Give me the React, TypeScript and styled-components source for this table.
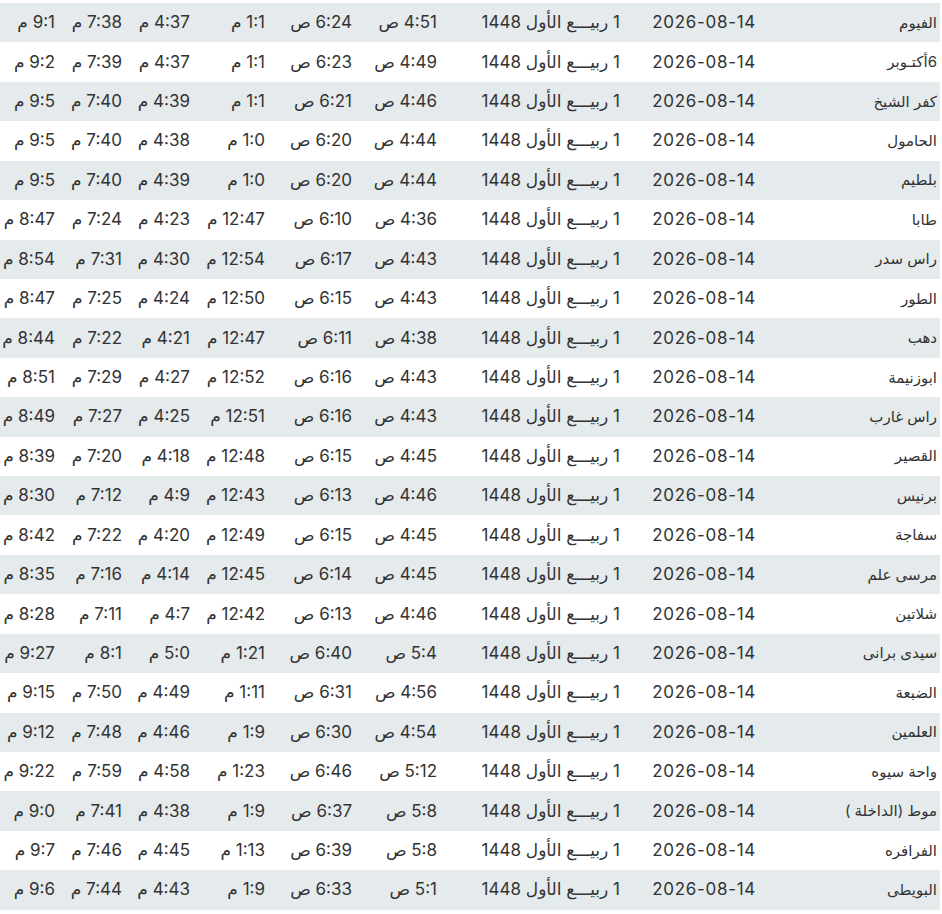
import styled, { createGlobalStyle } from 'styled-components';

const GlobalStyle = createGlobalStyle`
  html, body {
    margin: 0;
    padding: 0;
    background: #fff;
  }
  body {
    font-family: Inter, "DejaVu Sans", sans-serif;
  }
`;

type Row = {
  city: string;
  fajr: string;
  sunrise: string;
  dhuhr: string;
  asr: string;
  maghrib: string;
  isha: string;
};

const DATE = '2026-08-14';
const HIJRI = '1 ربيـــع الأول 1448';

const rows: Row[] = [
  { city: 'الفيوم', fajr: '4:51 ص', sunrise: '6:24 ص', dhuhr: '1:1 م', asr: '4:37 م', maghrib: '7:38 م', isha: '9:1 م' },
  { city: '6أكتـوبر', fajr: '4:49 ص', sunrise: '6:23 ص', dhuhr: '1:1 م', asr: '4:37 م', maghrib: '7:39 م', isha: '9:2 م' },
  { city: 'كفر الشيخ', fajr: '4:46 ص', sunrise: '6:21 ص', dhuhr: '1:1 م', asr: '4:39 م', maghrib: '7:40 م', isha: '9:5 م' },
  { city: 'الحامول', fajr: '4:44 ص', sunrise: '6:20 ص', dhuhr: '1:0 م', asr: '4:38 م', maghrib: '7:40 م', isha: '9:5 م' },
  { city: 'بلطيم', fajr: '4:44 ص', sunrise: '6:20 ص', dhuhr: '1:0 م', asr: '4:39 م', maghrib: '7:40 م', isha: '9:5 م' },
  { city: 'طابا', fajr: '4:36 ص', sunrise: '6:10 ص', dhuhr: '12:47 م', asr: '4:23 م', maghrib: '7:24 م', isha: '8:47 م' },
  { city: 'راس سدر', fajr: '4:43 ص', sunrise: '6:17 ص', dhuhr: '12:54 م', asr: '4:30 م', maghrib: '7:31 م', isha: '8:54 م' },
  { city: 'الطور', fajr: '4:43 ص', sunrise: '6:15 ص', dhuhr: '12:50 م', asr: '4:24 م', maghrib: '7:25 م', isha: '8:47 م' },
  { city: 'دهب', fajr: '4:38 ص', sunrise: '6:11 ص', dhuhr: '12:47 م', asr: '4:21 م', maghrib: '7:22 م', isha: '8:44 م' },
  { city: 'ابوزنيمة', fajr: '4:43 ص', sunrise: '6:16 ص', dhuhr: '12:52 م', asr: '4:27 م', maghrib: '7:29 م', isha: '8:51 م' },
  { city: 'راس غارب', fajr: '4:43 ص', sunrise: '6:16 ص', dhuhr: '12:51 م', asr: '4:25 م', maghrib: '7:27 م', isha: '8:49 م' },
  { city: 'القصير', fajr: '4:45 ص', sunrise: '6:15 ص', dhuhr: '12:48 م', asr: '4:18 م', maghrib: '7:20 م', isha: '8:39 م' },
  { city: 'برنيس', fajr: '4:46 ص', sunrise: '6:13 ص', dhuhr: '12:43 م', asr: '4:9 م', maghrib: '7:12 م', isha: '8:30 م' },
  { city: 'سفاجة', fajr: '4:45 ص', sunrise: '6:15 ص', dhuhr: '12:49 م', asr: '4:20 م', maghrib: '7:22 م', isha: '8:42 م' },
  { city: 'مرسى علم', fajr: '4:45 ص', sunrise: '6:14 ص', dhuhr: '12:45 م', asr: '4:14 م', maghrib: '7:16 م', isha: '8:35 م' },
  { city: 'شلاتين', fajr: '4:46 ص', sunrise: '6:13 ص', dhuhr: '12:42 م', asr: '4:7 م', maghrib: '7:11 م', isha: '8:28 م' },
  { city: 'سيدى برانى', fajr: '5:4 ص', sunrise: '6:40 ص', dhuhr: '1:21 م', asr: '5:0 م', maghrib: '8:1 م', isha: '9:27 م' },
  { city: 'الضبعة', fajr: '4:56 ص', sunrise: '6:31 ص', dhuhr: '1:11 م', asr: '4:49 م', maghrib: '7:50 م', isha: '9:15 م' },
  { city: 'العلمين', fajr: '4:54 ص', sunrise: '6:30 ص', dhuhr: '1:9 م', asr: '4:46 م', maghrib: '7:48 م', isha: '9:12 م' },
  { city: 'واحة سيوه', fajr: '5:12 ص', sunrise: '6:46 ص', dhuhr: '1:23 م', asr: '4:58 م', maghrib: '7:59 م', isha: '9:22 م' },
  { city: 'موط (الداخلة )', fajr: '5:8 ص', sunrise: '6:37 ص', dhuhr: '1:9 م', asr: '4:38 م', maghrib: '7:41 م', isha: '9:0 م' },
  { city: 'الفرافره', fajr: '5:8 ص', sunrise: '6:39 ص', dhuhr: '1:13 م', asr: '4:45 م', maghrib: '7:46 م', isha: '9:7 م' },
  { city: 'البويطى', fajr: '5:1 ص', sunrise: '6:33 ص', dhuhr: '1:9 م', asr: '4:43 م', maghrib: '7:44 م', isha: '9:6 م' },
];

// column widths, right to left
const widths = [181, 136, 183, 85, 87, 75, 68, 67, 58];

const App = (): JSX.Element => (
  <>
    <GlobalStyle />
    <Page>
      <Table dir="rtl">
        <colgroup>
          {widths.map((w, i) => (
            <col key={i} style={{ width: w }} />
          ))}
        </colgroup>
        <tbody>
          {rows.map((r, i) => (
            <Tr key={r.city} $striped={i % 2 === 0}>
              <City>{r.city}</City>
              <DateCell>{DATE}</DateCell>
              <Hijri>{HIJRI}</Hijri>
              <Td>{r.fajr}</Td>
              <Td>{r.sunrise}</Td>
              <Td>{r.dhuhr}</Td>
              <Td>{r.asr}</Td>
              <Td>{r.maghrib}</Td>
              <Td>{r.isha}</Td>
            </Tr>
          ))}
        </tbody>
      </Table>
    </Page>
  </>
);

export default App;

const Page = styled.div`
  padding-top: 3px;
  width: 940px;
`
const Table = styled.table`
  width: 940px;
  table-layout: fixed;
  border-collapse: collapse;
  color: #333;
  font-size: 17px;
`
const Tr = styled.tr<{ $striped: boolean }>`
  height: 39.43px;
  background: ${p => (p.$striped ? '#e5eaec' : '#fff')};
`
const Td = styled.td`
  padding: 0 3px 1px 0;
  text-align: right;
  white-space: nowrap;
  vertical-align: middle;
`
const City = styled(Td)`
  font-size: 15px;
`
const DateCell = styled(Td)`
  letter-spacing: 0.7px;
`
const Hijri = styled(Td)`
  letter-spacing: 0.2px;
`
